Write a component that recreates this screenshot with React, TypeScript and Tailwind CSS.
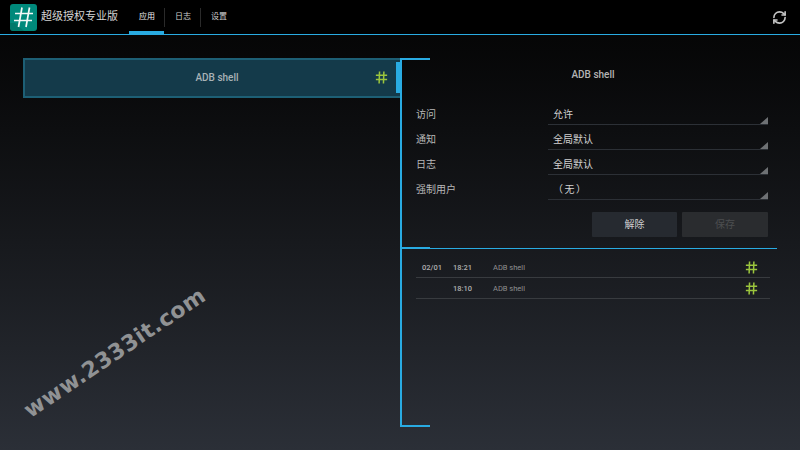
import { RefreshCw } from "lucide-react";

const FORM_ROWS = [
  { label: "访问", value: "允许" },
  { label: "通知", value: "全局默认" },
  { label: "日志", value: "全局默认" },
  { label: "强制用户", value: "（无）" },
];

const LOGS = [
  { date: "02/01", time: "18:21" },
  { date: "", time: "18:10" },
];

const FONT = "font-['Roboto','Noto_Sans_CJK_SC',sans-serif]";

const Hash = ({ className }: { className?: string }) => (
  <svg viewBox="0 0 12 12" className={className} fill="none" stroke="#9bc53d" strokeWidth="1.4">
    <path d="M4.2 0.5 L3.8 11.5 M8.2 0.5 L7.8 11.5 M0.8 3.9 H11.2 M0.8 7.9 H11.2" />
  </svg>
);

const Logo = () => (
  <svg viewBox="0 0 27 27" className="h-[27px] w-[27px] shrink-0">
    <rect x="0" y="0" width="27" height="27" rx="3" fill="#00897b" />
    <path d="M5 19 L14 27 H4 Q0 27 0 23 V19 Z" fill="#00695c" opacity="0.5" />
    <path d="M12 3.5 L8.5 23 M19.5 3.5 L16 23 M5 9.5 H23 M4 16.5 H22" stroke="#f4f8f7" strokeWidth="1.7" fill="none" />
  </svg>
);

const Tab = ({ label, active, divider }: { label: string; active?: boolean; divider?: boolean }) => (
  <div className="relative flex h-full w-[36px] items-center justify-center">
    <span className={`text-[8px] ${active ? "text-[#f0f0f0]" : "text-[#d0d0d0]"}`}>{label}</span>
    {active && <div className="absolute bottom-0 left-0 right-px h-[3px] bg-[#29abe2]" />}
    {divider && <div className="absolute right-0 top-[8px] h-[19px] w-px bg-[#2a2a2a]" />}
  </div>
);

export default function App() {
  return (
    <div className={`relative flex h-[450px] w-[800px] flex-col overflow-hidden bg-gradient-to-b from-[#040404] to-[#2b2f37] ${FONT}`}>
      <header className="flex h-[35px] shrink-0 items-center border-b border-[#29abe2] bg-black pl-[10px] pr-[13px]">
        <Logo />
        <span className="ml-[4px] w-[88px] whitespace-nowrap text-[11px] text-[#d4d4d4]">超级授权专业版</span>
        <div className="flex h-full">
          <Tab label="应用" active divider />
          <Tab label="日志" divider />
          <Tab label="设置" />
        </div>
        <RefreshCw className="ml-auto h-[15px] w-[15px] text-[#c4c4c4]" strokeWidth={2.6} />
      </header>

      <main className="flex flex-1 pt-[23px]">
        <div className="w-[400px] shrink-0 pl-[23px]">
          <div className="relative flex h-[40px] items-center justify-center border-2 border-r-0 border-[#1d5f75] bg-[#143a4a] pb-[1px] pl-[9px]">
            <span className="text-[10px] font-medium text-[#a8b2b6]">ADB shell</span>
            <Hash className="absolute left-[350px] top-[11px] h-[13px] w-[13px]" />
            <div className="absolute bottom-[3px] right-0 top-[2px] w-[4px] bg-[#29abe2]" />
          </div>
        </div>

        <section className="relative mb-[23px] flex w-[377px] flex-col border-l-2 border-[#29abe2]">
          <div className="absolute left-0 top-0 h-[2px] w-[28px] bg-[#29abe2]" />
          <div className="absolute bottom-0 left-0 h-[2px] w-[28px] bg-[#29abe2]" />

          <div className="relative flex h-[191px] shrink-0 flex-col border-b border-[#29abe2] pl-[14px] pr-[9px]">
            <div className="absolute -bottom-px left-0 h-[2px] w-[28px] bg-[#29abe2]" />
            <h2 className="pt-[12px] pb-[20px] pl-[2px] text-center text-[10px] font-medium leading-[10px] text-[#b4b4b4]">ADB shell</h2>
            <div className="flex flex-col">
              {FORM_ROWS.map((r) => (
                <div key={r.label} className="flex h-[25px] items-start">
                  <span className="w-[132px] pt-[9px] text-[10px] leading-[12px] text-[#b8b8b8]">{r.label}</span>
                  <div className="relative h-[25px] w-[220px] border-b border-[#2c3036] pl-[5px] pt-[9px] text-[10px] leading-[12px] text-[#d2d2d2]">
                    <span className={r.value === "（无）" ? "tracking-[1.5px]" : ""}>{r.value}</span>
                    <div className="absolute bottom-0 right-0 h-[7px] w-[8px] bg-[#6e7174] [clip-path:polygon(100%_0,100%_100%,0_100%)]" />
                  </div>
                </div>
              ))}
            </div>
            <div className="mt-[12px] flex justify-end gap-[5px]">
              <button className="h-[25px] w-[85px] rounded-[1px] bg-[#262a30] text-[10px] text-[#d0d0d0]">解除</button>
              <button className="h-[25px] w-[86px] rounded-[1px] bg-[#2a2c2f] text-[10px] text-[#4c4e50]">保存</button>
            </div>
          </div>

          <div className="flex flex-col pl-[14px] pr-[7px] pt-[8px]">
            {LOGS.map((l) => (
              <div key={l.time} className="flex h-[21px] items-center border-b border-[#383b3f] text-[7.5px]">
                <span className="w-[37px] pl-[6px] pt-[1px] font-medium text-[#b0b0b0]">{l.date}</span>
                <span className="w-[40px] pt-[1px] font-medium text-[#b0b0b0]">{l.time}</span>
                <span className="pt-[1px] text-[#909090]">ADB shell</span>
                <Hash className="ml-auto mr-[12px] h-[13px] w-[13px]" />
              </div>
            ))}
          </div>
        </section>
      </main>

      <div className="absolute left-[-5px] top-[338px] w-[240px] -rotate-[34deg] whitespace-nowrap text-center font-['DejaVu_Sans',sans-serif] text-[22px] font-bold leading-[30px] tracking-[0.5px] text-[#909294]">
        www.2333it.com
      </div>
    </div>
  );
}
